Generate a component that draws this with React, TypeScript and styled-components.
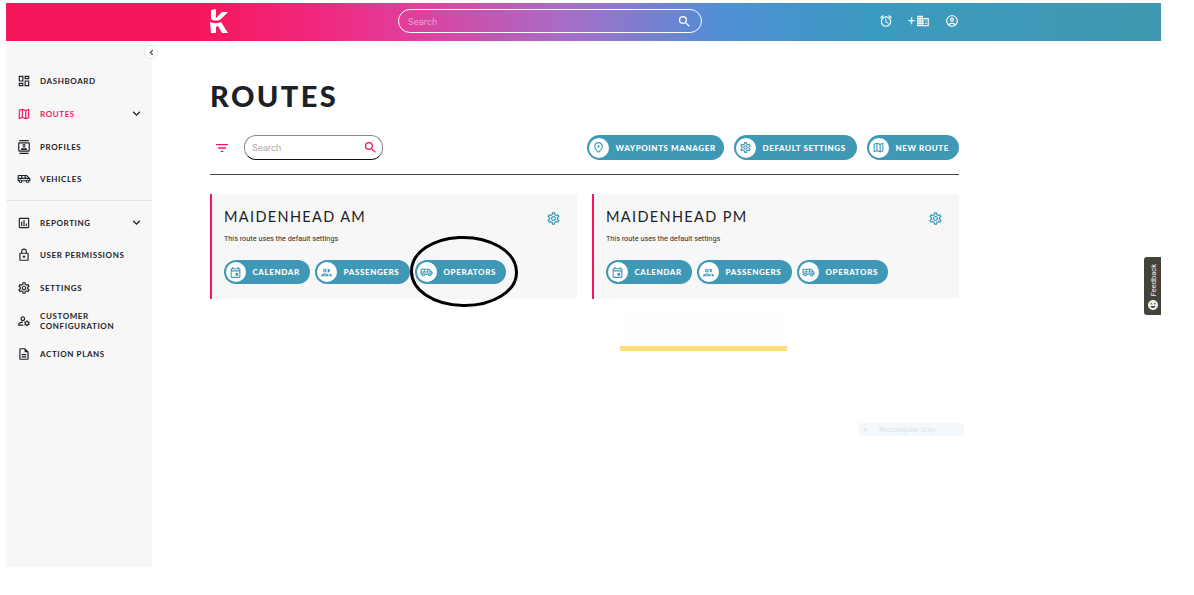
import React from 'react';
import styled, { createGlobalStyle } from 'styled-components';
import {
  MdChevronLeft,
  MdEmojiEmotions,
  MdExpandMore,
  MdFilterList,
  MdOutlineAccountCircle,
  MdOutlineAirportShuttle,
  MdOutlineAlarm,
  MdOutlineAssessment,
  MdOutlineContacts,
  MdOutlineDashboard,
  MdOutlineDescription,
  MdOutlineDomain,
  MdOutlineEvent,
  MdOutlineLock,
  MdOutlineManageAccounts,
  MdOutlineMap,
  MdOutlinePeople,
  MdOutlinePlace,
  MdOutlineSettings,
  MdSearch,
} from 'react-icons/md';

const PINK = '#f5175b';
const TEAL = '#3f98b5';
const INK = '#1c2127';

const GlobalStyle = createGlobalStyle`
  html, body { margin: 0; padding: 0; background: #fff; }
  body { font-family: Lato, "Liberation Sans", sans-serif; overflow: hidden; }
`;

const Page = styled.div`
  position: relative;
  width: 1194px;
  height: 595px;
  padding: 3px 33px 28px 6px;
  box-sizing: border-box;
  overflow: hidden;
`;
const Frame = styled.div`
  display: flex;
  flex-direction: column;
  height: 100%;
`;
const Header = styled.header`
  flex: 0 0 38px;
  display: flex;
  align-items: center;
  padding: 0 0 2px 204px;
  box-sizing: border-box;
  color: #fff;
  background: linear-gradient(
    90deg,
    ${PINK} 0%,
    ${PINK} 17%,
    #ef2a82 28%,
    #df3f9c 35%,
    #a56fc9 49%,
    #4f8fd6 62%,
    #3b9bc0 75%,
    #3f98b0 100%
  );
`;
const Logo = styled.svg`
  width: 18px;
  height: 24px;
  flex: none;
`;
const TopSearch = styled.div`
  width: 304px;
  height: 24px;
  margin-left: 170px;
  padding: 0 9px;
  box-sizing: border-box;
  display: flex;
  align-items: center;
  justify-content: space-between;
  border: 1px solid #fff;
  border-radius: 12px;
  font: 400 9.5px Roboto, sans-serif;
  color: rgba(255, 255, 255, 0.5);
  svg { font-size: 15px; color: #fff; }
`;
const TopActions = styled.div`
  margin-left: 177px;
  display: flex;
  align-items: center;
  gap: 15px;
  svg { font-size: 14px; display: block; }
`;
const AddOrg = styled.div`
  display: flex;
  align-items: center;
  gap: 1px;
  font: 400 12px Roboto, sans-serif;
`;
const Body = styled.div`
  flex: 1;
  display: flex;
  min-height: 0;
`;
const Sidebar = styled.nav`
  position: relative;
  flex: 0 0 146px;
  padding-top: 23.6px;
  box-sizing: border-box;
  background: #f7f7f7;
`;
const Collapse = styled.button`
  position: absolute;
  top: 4px;
  right: -6px;
  width: 14px;
  height: 14px;
  padding: 0;
  display: grid;
  place-items: center;
  border: 1px solid #e4e4e4;
  border-radius: 50%;
  background: #fff;
  color: #222;
  font-size: 11px;
`;
const NavItem = styled.div<{ $active?: boolean }>`
  height: 32.8px;
  padding: 0 8px 0 11px;
  display: flex;
  align-items: center;
  gap: 11px;
  color: ${(p) => (p.$active ? PINK : INK)};
  font-size: 8px;
  font-weight: 700;
  letter-spacing: 0.6px;
  line-height: 10px;
  text-transform: uppercase;
  svg { flex: none; }
`;
const NavIcon = styled.span`
  width: 12px;
  display: grid;
  place-items: center;
  font-size: 14px;
`;
const NavLabel = styled.span`
  flex: 1;
`;
const NavChevron = styled.span`
  display: grid;
  color: ${INK};
  font-size: 15px;
`;
const Divider = styled.hr`
  margin: 4px 0 5.5px;
  border: 0;
  border-top: 1px solid #e2e2e2;
`;
const Main = styled.main`
  flex: 1;
  padding-left: 58px;
  background: #fff;
`;
const Content = styled.div`
  width: 749px;
`;
const Title = styled.h1`
  margin: 36px 0 0;
  color: ${INK};
  font-size: 29px;
  font-weight: 900;
  line-height: 38px;
  letter-spacing: 2.4px;
`;
const Toolbar = styled.div`
  margin-top: 20px;
  padding-bottom: 14px;
  display: flex;
  align-items: center;
  border-bottom: 1px solid #444;
`;
const FilterButton = styled.span`
  width: 34px;
  padding-left: 4px;
  box-sizing: border-box;
  display: grid;
  color: ${PINK};
  font-size: 16px;
`;
const SearchBox = styled.div`
  width: 139px;
  height: 25px;
  padding: 0 4px 0 7px;
  box-sizing: border-box;
  display: flex;
  align-items: center;
  justify-content: space-between;
  border: 1px solid #888;
  border-bottom-color: #111;
  border-radius: 12px;
  color: #aaa;
  font: 400 9.5px Roboto, sans-serif;
  svg { color: ${PINK}; font-size: 15px; }
`;
const ToolbarActions = styled.div`
  margin-left: auto;
  display: flex;
  gap: 10px;
`;
const Pill = styled.div<{ $large?: boolean; $width: number }>`
  width: ${(p) => p.$width}px;
  height: ${(p) => (p.$large ? 25 : 24)}px;
  padding: 1.5px;
  box-sizing: border-box;
  display: flex;
  align-items: center;
  gap: 7px;
  border-radius: 13px;
  background: ${TEAL};
  color: #fff;
  font-size: 8px;
  font-weight: 900;
  letter-spacing: 0.6px;
  text-transform: uppercase;
  white-space: nowrap;
`;
const PillIcon = styled.span`
  flex: none;
  width: 20px;
  height: 20px;
  display: grid;
  place-items: center;
  border-radius: 50%;
  background: #fff;
  color: ${TEAL};
  font-size: 13px;
`;
const Cards = styled.div`
  margin-top: 19px;
  display: grid;
  grid-template-columns: 367px 367px;
  gap: 15px;
`;
const Card = styled.article`
  height: 105px;
  padding: 14px 16px 0 12px;
  box-sizing: border-box;
  background: #f7f7f7;
  border-left: 2px solid ${PINK};
`;
const CardHead = styled.div`
  display: flex;
  align-items: flex-start;
  justify-content: space-between;
  svg { display: block; margin-top: 3px; color: ${TEAL}; font-size: 15px; }
`;
const CardTitle = styled.h2`
  margin: 0;
  color: ${INK};
  font-size: 14.5px;
  font-weight: 400;
  line-height: 18px;
  letter-spacing: 1.35px;
`;
const CardNote = styled.p`
  margin: 8px 0 0;
  color: #2a2a2a;
  font: 400 7.3px/9px Roboto, sans-serif;
`;
const CardActions = styled.div`
  margin-top: 17px;
  display: flex;
  gap: 5px;
`;
const Ring = styled.svg`
  position: absolute;
  left: 409px;
  top: 235px;
  width: 110px;
  height: 73px;
`;
const SnipBar = styled.div`
  position: absolute;
  left: 620px;
  top: 313px;
  width: 167px;
  height: 33px;
  background: #fefefe;
  border-bottom: 5px solid #fedd7f;
`;
const SnipHint = styled.div`
  position: absolute;
  left: 859px;
  top: 423px;
  width: 105px;
  height: 13px;
  padding-left: 20px;
  box-sizing: border-box;
  background: #f3f8fc;
  color: #dfe2e5;
  font: 400 7.5px/13px Roboto, sans-serif;
  &::before {
    content: '';
    position: absolute;
    left: 5px;
    top: 5px;
    width: 3px;
    height: 3px;
    border-radius: 50%;
    background: #f0e4d0;
  }
`;
const Feedback = styled.div`
  position: absolute;
  left: 1144px;
  top: 257px;
  width: 17px;
  height: 58px;
  padding: 0 0 4px 1px;
  box-sizing: border-box;
  display: flex;
  flex-direction: column-reverse;
  align-items: center;
  gap: 3px;
  border-radius: 3px 0 0 3px;
  background: #45423a;
  color: #eee;
  font: 400 7.5px Roboto, sans-serif;
  svg { font-size: 12px; }
`;
const FeedbackText = styled.span`
  writing-mode: vertical-rl;
  transform: rotate(180deg);
`;

const nav: { label: string; icon: React.ReactNode; active?: boolean; more?: boolean }[] = [
  { label: 'Dashboard', icon: <MdOutlineDashboard /> },
  { label: 'Routes', icon: <MdOutlineMap />, active: true, more: true },
  { label: 'Profiles', icon: <MdOutlineContacts /> },
  { label: 'Vehicles', icon: <MdOutlineAirportShuttle /> },
];
const nav2: typeof nav = [
  { label: 'Reporting', icon: <MdOutlineAssessment />, more: true },
  { label: 'User permissions', icon: <MdOutlineLock /> },
  { label: 'Settings', icon: <MdOutlineSettings /> },
  { label: 'Customer configuration', icon: <MdOutlineManageAccounts /> },
  { label: 'Action plans', icon: <MdOutlineDescription /> },
];

function SideLink({ item }: { item: (typeof nav)[number] }) {
  return (
    <NavItem $active={item.active}>
      <NavIcon>{item.icon}</NavIcon>
      <NavLabel>{item.label}</NavLabel>
      {item.more && (
        <NavChevron>
          <MdExpandMore />
        </NavChevron>
      )}
    </NavItem>
  );
}

function ActionPill({
  icon,
  label,
  width,
  large,
}: {
  icon: React.ReactNode;
  label: string;
  width: number;
  large?: boolean;
}) {
  return (
    <Pill $width={width} $large={large}>
      <PillIcon>{icon}</PillIcon>
      {label}
    </Pill>
  );
}

function RouteCard({ name }: { name: string }) {
  return (
    <Card>
      <CardHead>
        <CardTitle>{name}</CardTitle>
        <MdOutlineSettings />
      </CardHead>
      <CardNote>This route uses the default settings</CardNote>
      <CardActions>
        <ActionPill icon={<MdOutlineEvent />} label="Calendar" width={86} />
        <ActionPill icon={<MdOutlinePeople />} label="Passengers" width={95} />
        <ActionPill icon={<MdOutlineAirportShuttle />} label="Operators" width={91} />
      </CardActions>
    </Card>
  );
}

export default function App() {
  return (
    <Page>
      <GlobalStyle />
      <Frame>
        <Header>
          <Logo viewBox="0 0 18 24" aria-label="logo">
            <path
              fill="#fff"
              d="M1 1 L6 0 L6 9 L12 3 L18 3 L11 10 C8 12 4 12 1 10 Z M0 13 C5 15 9 14 11 13 L18 24 L12 24 L8 17 L6 18 L6 24 L1 24 Z"
            />
          </Logo>
          <TopSearch>
            Search
            <MdSearch />
          </TopSearch>
          <TopActions>
            <MdOutlineAlarm />
            <AddOrg>
              +<MdOutlineDomain />
            </AddOrg>
            <MdOutlineAccountCircle />
          </TopActions>
        </Header>
        <Body>
          <Sidebar>
            <Collapse aria-label="Collapse">
              <MdChevronLeft />
            </Collapse>
            {nav.map((item) => (
              <SideLink key={item.label} item={item} />
            ))}
            <Divider />
            {nav2.map((item) => (
              <SideLink key={item.label} item={item} />
            ))}
          </Sidebar>
          <Main>
            <Content>
              <Title>ROUTES</Title>
              <Toolbar>
                <FilterButton>
                  <MdFilterList />
                </FilterButton>
                <SearchBox>
                  Search
                  <MdSearch />
                </SearchBox>
                <ToolbarActions>
                  <ActionPill large icon={<MdOutlinePlace />} label="Waypoints manager" width={137} />
                  <ActionPill large icon={<MdOutlineSettings />} label="Default settings" width={123} />
                  <ActionPill large icon={<MdOutlineMap />} label="New route" width={92} />
                </ToolbarActions>
              </Toolbar>
              <Cards>
                <RouteCard name="MAIDENHEAD AM" />
                <RouteCard name="MAIDENHEAD PM" />
              </Cards>
            </Content>
          </Main>
        </Body>
      </Frame>
      <Ring viewBox="0 0 110 73">
        <path
          d="M50 2.5 C80 1 107 16 107.5 37 C108 56 84 71 54 70.5 C24 70 3 55 2.5 37 C2 17 24 4 50 2.5 Z"
          fill="none"
          stroke="#000"
          strokeWidth="3"
        />
      </Ring>
      <SnipBar />
      <SnipHint>Rectangular Snip</SnipHint>
      <Feedback>
        <MdEmojiEmotions />
        <FeedbackText>Feedback</FeedbackText>
      </Feedback>
    </Page>
  );
}
